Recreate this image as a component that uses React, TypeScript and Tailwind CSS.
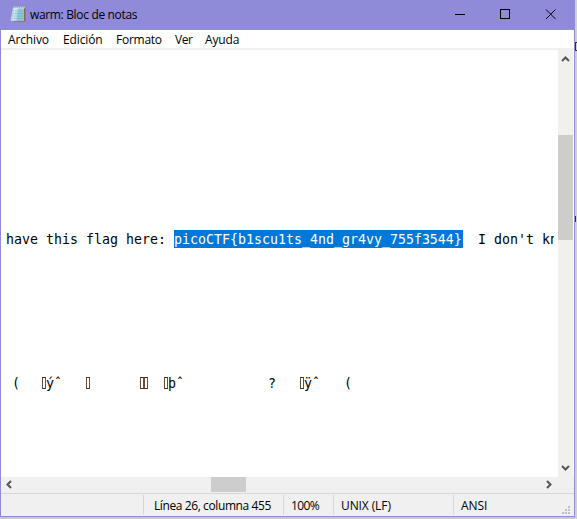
import type { ReactNode } from "react";

const MENU = [
  { label: "Archivo", cls: "w-[55px] tracking-[-0.13px]" },
  { label: "Edición", cls: "w-[53px] tracking-[-0.13px]" },
  { label: "Formato", cls: "w-[59px] tracking-[-0.25px]" },
  { label: "Ver", cls: "w-[30px] tracking-[-0.5px]" },
  { label: "Ayuda", cls: "w-[40px] tracking-[-0.13px]" },
];

function NotepadIcon() {
  return (
    <svg width="16" height="16" viewBox="0 0 16 16" className="block">
      <path d="M3 1.5h11.5v13.5H.5z" fill="#b9d6e2" />
      <path d="M14 2h1.500v13.500H4V14.500h10z" fill="#806e55" />
      <path d="M4 2H14v12.500H3z" fill="#8dcad9" />
      <path d="M4 2H8L6.500 14.500H3z" fill="#c6e7ef" />
      <path d="M5 5h8.500M4.500 7.500H13.500M4.500 10h9M4 12.500h9.500" stroke="#68a9be" strokeWidth=".6" />
      <path d="M3.500 1.500h11" stroke="#e8eded" strokeWidth="2" strokeDasharray="1.200 .8" />
      <path d="M3.500 1h11" stroke="#60727a" strokeWidth="1" strokeDasharray=".8 1.200" />
    </svg>
  );
}

function Chevron({ d }: { d: string }) {
  return (
    <svg width="9" height="9" viewBox="0 0 9 9" className="block">
      <path d={d} fill="none" stroke="#555" strokeWidth="2" />
    </svg>
  );
}

function Cell({ className, children }: { className: string; children?: ReactNode }) {
  return <div className={`h-5 shrink-0 whitespace-nowrap pt-px leading-[20px] ${className}`}>{children}</div>;
}

function Tofu() {
  return <span className="mt-[3px] h-[12px] w-[4px] shrink-0 border border-y-[#333] border-l-[#6b4a34] border-r-[#3e5c78]" />;
}

export default function App() {
  return (
    <div className="flex h-[519px] w-[577px] overflow-hidden bg-[#c9c9cb] font-['Open_Sans','Noto_Sans',sans-serif] text-[12px] text-black">
      <div className="flex h-[517px] w-[575px] shrink-0 flex-col border-r border-b border-l border-[#908bd8] bg-white">
        <header className="flex h-[30px] shrink-0 items-start bg-[#908bd8]">
          <div className="ml-[9px] mt-[6px] w-[20px]"><NotepadIcon /></div>
          <div className="mt-[6px] flex-1 whitespace-nowrap leading-[18px] tracking-[-0.34px]">warm: Bloc de notas</div>
          <svg width="120" height="30" viewBox="454 0 120 30" fill="none" stroke="#000">
            <path d="M455 14.500h10M500.500 9.500h9v9h-9z" shapeRendering="crispEdges" />
            <path d="M546 9.500l9.500 9.500M555.500 9.500L546 19" />
          </svg>
        </header>

        <nav className="flex h-5 shrink-0 border-b-2 border-[#f0f0f0] pl-[7px] leading-[20px]">
          {MENU.map((m) => (
            <span key={m.label} className={`shrink-0 whitespace-nowrap ${m.cls}`}>{m.label}</span>
          ))}
        </nav>

        <div className="flex h-[427px] shrink-0">
          <main className="w-[553px] shrink-0 overflow-hidden pt-[180px] pl-[5px] font-['DejaVu_Sans_Mono',monospace] text-[13.29px] leading-[20px]">
            <div className="flex h-[18px] whitespace-pre">
              <span className="w-[168px] shrink-0">have this flag here: </span>
              <span className="w-[289px] shrink-0 bg-[#0078d7] text-white">{"picoCTF{b1scu1ts_4nd_gr4vy_755f3544}"}</span>
              <span className="-ml-px">{"  I don't kn"}</span>
            </div>
            <div className="mt-[126px] flex h-[18px] pl-[6px]">
              <span className="w-[30px] shrink-0">(</span>
              <Tofu /><span className="w-[40px] shrink-0">ýˆ</span>
              <Tofu /><span className="w-[50px] shrink-0" />
              <Tofu /><Tofu /><span className="w-[16px] shrink-0" />
              <Tofu /><span className="w-[100px] shrink-0">þˆ</span>
              <span className="w-[32px] shrink-0">?</span>
              <Tofu /><span className="w-[40px] shrink-0">ÿˆ</span>
              <span>(</span>
            </div>
          </main>
          <div className="ml-[4px] flex w-[15px] shrink-0 flex-col items-center bg-[#f0f0f0]">
            <div className="h-[85px] pt-[5px]"><Chevron d="M1 6l3.500-3.500L8 6" /></div>
            <div className="h-[105px] w-full bg-[#cdcdcd]" />
            <div className="mt-auto pb-[5px]"><Chevron d="M1 3l3.500 3.500L8 3" /></div>
          </div>
        </div>

        <div className="flex h-4 shrink-0 bg-[#f0f0f0]">
          <div className="w-[210px] pt-[3px] pl-[4px]"><Chevron d="M6 1L2.500 4.500L6 8" /></div>
          <div className="h-[15px] w-[35px] bg-[#cdcdcd]" />
          <div className="ml-[298px] pt-[3px]"><Chevron d="M3 1l3.500 3.500L3 8" /></div>
        </div>

        <footer className="flex h-[23px] shrink-0 border-t border-[#d7d7d7] bg-[#f0f0f0] pt-px">
          <Cell className="w-[143px] border-r border-[#d7d7d7]" />
          <Cell className="w-[140px] border-r border-[#d7d7d7] pl-[10px] tracking-[-0.4px]">Línea 26, columna 455</Cell>
          <Cell className="w-[50px] border-r border-[#d7d7d7] pl-[7px] tracking-[-0.6px]">100%</Cell>
          <Cell className="w-[120px] border-r border-[#d7d7d7] pl-[7px] tracking-[-0.1px]">UNIX (LF)</Cell>
          <Cell className="w-[107px] pl-[7px] tracking-[-0.1px]">ANSI</Cell>
          <svg width="12" height="12" viewBox="0 0 12 12" fill="#bfbfbf" className="mt-[8px] shrink-0">
            <path d="M7 3h2v2H7zM4 6h2v2H4zM7 6h2v2H7zM1 9h2v2H1zM4 9h2v2H4zM7 9h2v2H7z" />
          </svg>
        </footer>
      </div>
      <div className="flex flex-col bg-[#d0d0d2]">
        <span className="mt-[42px] h-[9px] w-[4px] border-y border-l border-[#333]" />
        <span className="mt-[165px] h-[6px] w-px bg-[#223052]" />
      </div>
    </div>
  );
}
